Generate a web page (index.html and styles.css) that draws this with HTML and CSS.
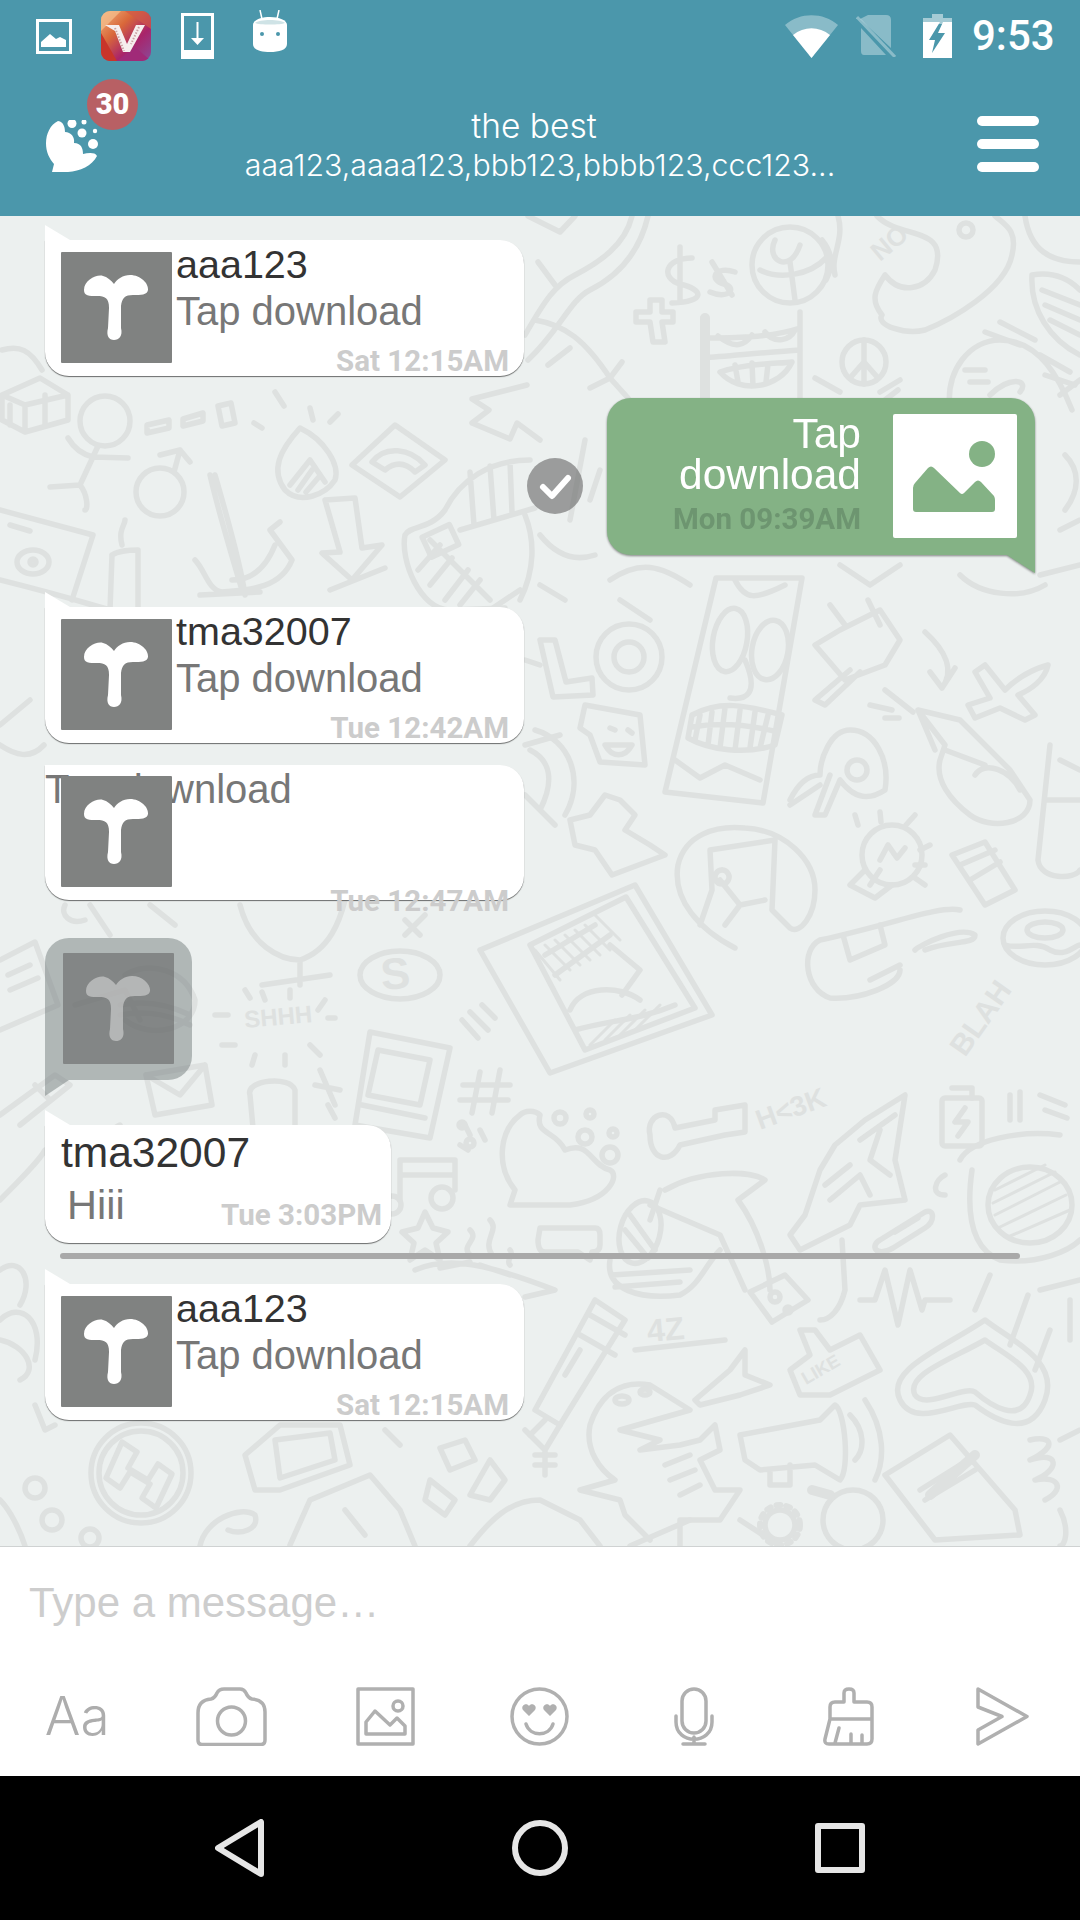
FILE: index.html
```html
<!DOCTYPE html>
<html lang="en">
<head>
<meta charset="utf-8">
<title>the best</title>
<link rel="stylesheet" href="styles.css">
</head>
<body>
<div class="phone">
  <svg width="0" height="0" class="defs">
    <defs>
      <symbol id="seed" viewBox="0 0 111 111"><path d="M23 38C23 28 36 22 42 24C46 25 50 28 53 32C56 27 62 23 69 23C80 23 88 32 87 38C86 43 80 43 72 43C64 43 61 46 60 54L60 76C62 84 58 88 53 88C48 88 45 84 47 76L48 56C48 46 44 44 36 44C28 44 23 44 23 38Z"/></symbol>
    </defs>
  </svg>
  <header class="top">
    <div class="status">
      <div class="status-left">
        <svg class="s-img" viewBox="0 0 36 35"><rect x="1.5" y="1.5" width="33" height="32" fill="none" stroke="#fff" stroke-width="3"/><path d="M5 28V23L14 15L20 20L24 18L30 21V28Z" fill="#fff"/></svg>
        <svg class="s-v" viewBox="0 0 50 50">
          <defs>
            <linearGradient id="vg" x1="0" y1="0" x2="1" y2="1"><stop offset="0" stop-color="#f0b27c"/><stop offset=".35" stop-color="#d9683a"/><stop offset=".65" stop-color="#a9246a"/><stop offset="1" stop-color="#8a4a98"/></linearGradient>
            <clipPath id="vc"><rect width="50" height="50" rx="9"/></clipPath>
          </defs>
          <g clip-path="url(#vc)">
            <rect width="50" height="50" fill="url(#vg)"/>
            <path d="M0 50V22L16 50Z" fill="#c8352a"/>
            <path d="M16 50L34 36L50 50Z" fill="#a02a78"/>
            <path d="M24 0H50V18Z" fill="#d05a48" opacity=".7"/>
            <path d="M0 0H20L0 20Z" fill="#f5c08f" opacity=".7"/>
          </g>
          <path d="M4 14H18L26 33L35 14H44L29 41H22L14 20Z" fill="#f6eeee"/>
          <path d="M14 17L23 40M38 16L30 33" stroke="#c9a3a3" stroke-width="2" stroke-dasharray="1.5 1.5" fill="none"/>
        </svg>
        <svg class="s-dl" viewBox="0 0 33 46"><path d="M0 0H33V46H0ZM3 3V37H30V3Z" fill="#fff" fill-rule="evenodd"/><path d="M15.500 9H17.500V25L23 25L16.500 32L10 25L15.500 25Z" fill="#fff"/></svg>
        <svg class="s-and" viewBox="0 0 34 46"><path d="M7 0L9 9M26 0L24 9" stroke="#fff" stroke-width="1.500" fill="none"/><path d="M0 15C0 10 8 7 17 7S34 10 34 15V34C34 40 26 42 17 42S0 40 0 34Z" fill="#fff"/><path d="M2 13C6 9 28 9 32 13C28 15 6 15 2 13Z" fill="#cfe3e6"/><circle cx="9" cy="24" r="2" fill="#4b97ab"/><circle cx="25" cy="24" r="2" fill="#4b97ab"/></svg>
      </div>
      <div class="status-right">
        <svg class="s-wifi" viewBox="0 0 53 43"><path d="M0 10C15 -3 38 -3 53 10L26.500 43Z" fill="#fff" opacity=".35"/><path d="M8 20C19 11 34 11 45 20L26.500 43Z" fill="#fff"/></svg>
        <svg class="s-sim" viewBox="0 0 40 42"><path d="M12 0H30Q35 0 35 5V33L4 4ZM5 13L30 40H8Q5 40 5 36Z" fill="#fff" opacity=".35"/><path d="M1 2L39 42" stroke="#fff" stroke-width="3" opacity=".35"/></svg>
        <svg class="s-bat" viewBox="0 0 29 44"><path d="M9 0H20V4H29V10H0V4H9Z" fill="#fff" opacity=".5"/><path d="M0 8H29V44H0ZM17 8L6 26H12L9 39L22 19H15L20 8Z" fill="#fff" fill-rule="evenodd"/></svg>
        <span class="clock">9:53</span>
      </div>
    </div>
    <div class="appbar">
      <div class="logo">
        <svg class="logo-mark" viewBox="0 0 56 56"><path d="M12 1C4 5 0 14 0 23C0 32 3 38 8 44L6 52H22C34 51 46 46 51 36C49 32 42 33 37 34C37 28 35 23 28 23C29 17 25 12 19 12C19 8 18 2 12 1Z" fill="#fff"/><circle cx="26" cy="3.500" r="4.500" fill="#fff"/><circle cx="38" cy="2" r="2.500" fill="#fff"/><circle cx="36" cy="13" r="4.500" fill="#fff"/><circle cx="49" cy="11" r="2.200" fill="#fff"/><circle cx="47" cy="24" r="5" fill="#fff"/></svg>
        <span class="badge">30</span>
      </div>
      <div class="title">
        <div class="title-main">the best</div>
        <div class="title-sub">aaa123,aaaa123,bbb123,bbbb123,ccc123...</div>
      </div>
      <div class="burger"><i></i><i></i><i></i></div>
    </div>
  </header>

  <main class="chat">
    <svg class="doodles" viewBox="0 216 1080 1330" width="1080" height="1330">
      <g class="dd">
        <!-- top right -->
        <path d="M528 360C560 330 570 300 590 290C620 275 640 250 648 216M525 335C545 300 555 285 575 275C600 262 625 245 632 216M535 320C565 325 585 340 610 378M528 216L560 232L575 216M610 378L590 388M610 378L622 362M610 378L628 398M570 348L548 365M538 262L555 285"/>
        <path d="M680 247V300M692 258C665 258 660 278 680 284C705 290 705 302 672 303M712 262L732 295M735 272C715 265 708 280 724 284C738 288 728 300 710 292"/>
        <circle cx="790" cy="265" r="38"/><path d="M775 240C765 260 790 275 800 245M790 262L795 300M760 270C780 280 810 275 826 258M822 240C830 250 835 262 826 280M838 216C845 240 830 255 835 275"/>
        <path d="M877 216C900 240 950 225 935 270C925 290 900 295 885 275C875 290 870 300 882 315C875 325 905 335 925 330C950 320 1005 290 1012 255C1018 230 1005 225 995 216"/>
        <circle cx="966" cy="230" r="7"/>
        <path d="M1025 216C1030 250 1050 262 1080 262"/>
        <path d="M650 300H662V312H673V322H662L665 342H653L650 322H636V312H650Z"/>
        <path d="M703 318V398M800 312V398M703 338C730 338 770 338 800 328M703 358C730 356 770 352 800 350M718 336C735 350 745 345 752 335M765 332C775 345 790 340 795 330M720 372C750 362 780 364 792 362C780 388 740 395 720 372ZM735 365L738 382M752 363L753 386M768 364L766 382"/>
        <path class="thick" d="M705 318V398"/>
        <circle cx="864" cy="362" r="22"/><path d="M864 340V384M864 362L850 378M864 362L878 378M815 378L840 392M880 392L900 380M885 400L898 390"/>
        <path d="M950 410C945 370 970 340 1000 340C1040 340 1060 380 1072 410M985 332L1020 345M1000 322L1035 340M1040 355L1070 372M1045 375L1075 385M965 370H985M970 382H988M990 395C1010 375 1030 380 1020 392"/>
        <path d="M1032 275C1060 270 1075 285 1080 290M1032 275C1030 310 1050 340 1080 355M1042 290L1080 305M1045 305L1080 320M1050 320L1080 335"/>
        <path d="M1060 395L1080 380M1065 455C1080 470 1080 490 1065 510M1060 530L1080 520M1040 575L1080 565"/>
        <path d="M527 385L472 399L489 410L472 423L510 439L517 423L540 440"/>
        <!-- under the sent row -->
        <path d="M610 580C640 560 660 565 690 585M840 565L870 585L900 565M960 575C980 595 1020 600 1045 585M620 600L650 620M540 585L565 600"/>
        <path d="M600 470L590 500M585 440L570 520M540 535C560 560 580 560 595 555"/>
        <!-- left mid -->
        <path d="M2 395L40 378L68 395V420L25 432L2 420ZM25 405V432M2 395L25 405L68 395M10 405V425M45 395V425M2 350C20 345 30 350 42 370"/>
        <circle cx="105" cy="421" r="25"/>
        <path d="M98 446L80 485M68 438C75 450 85 455 93 457L128 458M80 485L50 487M80 485C88 495 88 510 85 510"/>
        <path d="M147 425L169 420V428L147 433ZM183 419L203 413V421L183 426ZM218 406L231 403L235 423L222 426Z"/>
        <circle cx="160" cy="492" r="24"/><path d="M174 472L180 450M160 455L180 450L190 462"/>
        <path d="M300 428C280 450 270 470 285 490C300 505 325 495 335 480C340 465 325 440 300 428ZM290 485L310 460L325 482M298 490L312 470M306 492L318 478"/>
        <path d="M395 425L445 460L400 497L352 465ZM372 462C385 445 410 448 425 465L415 472C405 462 395 462 385 470Z"/>
        <path d="M275 392L284 406M310 408L313 420M330 422L338 414M262 428L254 423"/>
        <path d="M210 475C218 510 230 550 242 590M215 475C225 510 240 560 245 595"/>
        <path d="M195 560C205 570 208 590 222 592C245 590 280 590 292 560L270 530L280 522M275 545C265 570 250 580 232 580M200 595L260 592"/>
        <path d="M112 555L110 610M138 550V612M112 555C120 550 130 550 138 550M122 545C118 530 125 525 125 520M110 610C75 600 60 595 0 580"/>
        <path d="M325 500L355 498L362 548L382 545L352 580L322 553L340 552ZM330 590L385 568"/>
        <path d="M0 510L93 535L72 600M10 525L30 531"/><ellipse cx="33" cy="562" rx="16" ry="12"/><circle cx="33" cy="562" r="3"/>
        <path d="M530 460C490 460 460 480 445 510C430 530 410 525 405 535C400 560 420 610 450 610L505 608M460 530L535 508M430 540L490 600M470 472L474 525M490 466L494 520M510 462L512 512M440 545L418 570M452 558L430 585M468 570L445 600M480 580L460 605"/>
        <rect x="425" y="530" width="30" height="22" transform="rotate(-25 440 540)"/>
        <path d="M525 515C535 540 535 570 520 600M490 610L520 590"/>
        <!-- bottom of bubble 3 -->
        <path d="M0 745C15 755 30 760 44 745M0 725L30 700M525 660L540 665M525 745L560 735"/>
        <!-- tiki -->
        <path d="M716 578L802 578L763 803L665 792Z"/>
        <ellipse cx="730" cy="640" rx="17" ry="32" transform="rotate(10 730 640)"/><ellipse cx="770" cy="650" rx="18" ry="30" transform="rotate(10 770 650)"/>
        <path d="M735 580C745 600 755 600 785 585M692 715C720 700 745 705 782 715L775 745C745 755 710 750 688 738ZM692 727C720 722 750 725 778 732M700 715L695 740M712 712L708 745M725 708L720 748M740 710L735 750M755 712L750 748M768 715L760 748M675 760L700 778L725 765L760 780M745 660C760 695 745 700 730 698"/>
        <!-- LO and friends -->
        <path d="M540 640L555 640L566 682L592 678L593 695L553 697Z"/><circle cx="629" cy="657" r="33"/><circle cx="629" cy="657" r="15"/>
        <path d="M840 630L880 610L900 640L885 665L845 680L815 645ZM860 672L825 705L815 700L850 670M868 600L880 625M830 605L845 625"/>
        <path d="M925 632C945 650 955 670 942 688M930 672L942 688L955 668"/>
        <path d="M1048 665C1030 670 1015 680 1005 690L985 665L975 672L990 698L968 705L975 718L1000 708L1025 720L1035 715L1018 695C1030 690 1045 680 1048 665Z"/>
        <path d="M885 690L913 712M870 705L892 710M885 718L899 718"/>
        <path d="M918 710L960 720L1010 770L1030 800C1030 825 990 830 970 815C950 800 935 780 940 760L945 745ZM918 710L935 750M945 750L985 765M975 775C985 760 1010 770 1020 790"/>
        <path d="M585 705L640 715L645 765L600 762L590 735L580 728ZM605 745C612 758 625 758 632 745ZM610 728L615 730M628 730L632 733"/>
        <path d="M535 730C570 740 585 780 565 815M530 750C550 760 555 780 540 810M525 795L555 825"/>
        <path d="M605 795L620 800L635 815L625 830L650 845L665 855L612 875L595 850L575 845L570 820L590 815Z"/>
        <path d="M790 800C800 780 810 775 820 775C820 760 830 730 850 730C875 730 890 760 885 790C870 800 855 800 840 780L825 815L815 815L830 775M790 805L820 785"/>
        <circle cx="857" cy="770" r="10"/>
        <path d="M735 948C700 930 672 900 678 865C685 835 715 825 745 828C785 830 815 860 815 890C815 915 800 935 790 928L772 910L775 840L710 850L712 890L700 925M722 870a7 7 0 1 0 .1 0M720 880L740 905L725 925M740 905L765 900"/>
        <circle cx="892" cy="855" r="30"/>
        <path d="M865 870L850 885L875 898L892 885M870 885L880 870M880 860L888 845L897 858L905 848M855 815L858 825M880 812L881 822M915 815L906 825M930 845L920 850M925 865L915 865M925 885L915 878"/>
        <path d="M952 855L985 842L1015 890L985 905ZM960 865L995 850M970 880L1000 862"/>
        <ellipse cx="1045" cy="938" rx="42" ry="27"/><ellipse cx="1045" cy="930" rx="18" ry="8"/>
        <path d="M1005 945C1020 950 1035 940 1050 950C1065 958 1075 945 1080 945"/>
        <path d="M960 910C940 905 890 925 820 940C800 950 805 990 830 998C860 1000 900 985 900 970M843 935L850 960L885 945L880 925M870 980L900 965M925 950C950 940 975 945 975 935C960 925 920 945 915 950"/>
        <path d="M1050 745L1038 860C1040 880 1075 880 1080 870M1045 800H1080M1060 760L1080 770"/>
        <!-- frame -->
        <path d="M635 885L712 1015L550 1073L480 950Z"/>
        <path d="M626 897L695 1008L585 1050L530 945ZM545 955L595 925M555 975L610 935M570 1010C580 985 620 985 640 1000M575 1030C610 1020 640 1020 675 1005M610 945L640 970L622 995"/>
        <path class="thin" d="M535 950L560 980M545 945L570 970M555 940L580 965M565 935L590 960M575 930L600 955M585 925L610 950M595 915L620 940M590 1045L615 1020M605 1040L630 1015M620 1035L645 1010M635 1030L660 1005"/>
        <!-- goblet zone -->
        <path d="M240 905C250 945 280 960 300 960C330 950 340 920 345 900M300 960V985M262 985L330 975M90 905L110 935M150 905L175 925M65 905C60 915 70 925 85 920M405 920L420 935M425 915L405 935"/>
        <ellipse cx="400" cy="975" rx="40" ry="24"/>
        <path d="M0 960L35 942L58 1005L0 1030M8 975L30 965M10 990L38 978"/>
        <path d="M125 975C150 960 185 970 195 1000C195 1030 150 1040 125 1020M75 1005L125 990L140 1020M120 1005C145 1000 170 1005 190 1015M120 1015C145 1010 170 1015 190 1025"/>
        <path d="M215 1015H228M222 1045H235M245 990L250 998M262 992L265 1000M290 990V998M325 1000L318 1010M335 1018H328M310 1045L320 1055M255 1055L252 1065M285 1055V1065"/>
        <path d="M370 1032L450 1048L430 1138L355 1125ZM378 1050L430 1060L420 1105L368 1095ZM362 1105L425 1118"/>
        <path d="M462 1020L478 1038M470 1012L488 1030M482 1005L495 1018"/>
        <path d="M480 1072L472 1113M500 1070L492 1113M463 1085H510M460 1100H508"/>
        <path d="M320 1070L335 1105M315 1085L340 1090M328 1105L335 1118"/>
        <path d="M250 1095C245 1080 290 1075 295 1090V1150M250 1095L255 1150"/>
        <path d="M146 1075L205 1065L212 1105L155 1115ZM146 1075L180 1095L205 1065"/>
        <path d="M0 1115L55 1075L70 1085L20 1125M35 1085L50 1100M60 1140C80 1150 110 1130 120 1125"/>
        <path d="M0 1200C20 1180 40 1160 45 1150M0 1270C20 1255 35 1280 20 1305M0 1340C25 1345 40 1370 20 1380M0 1320C20 1300 45 1320 35 1360"/>
        <path d="M465 1125L470 1135M480 1130L485 1140M460 1145L468 1150"/>
        <path d="M400 1160H455V1190M400 1160V1200M402 1175H455"/><circle cx="442" cy="1198" r="11"/><circle cx="392" cy="1205" r="9"/>
        <!-- bomb -->
        <path d="M520 1115C500 1130 495 1165 515 1190L510 1205L570 1205C610 1200 620 1175 610 1170C590 1165 590 1140 565 1150C555 1130 535 1135 540 1115C535 1110 525 1110 520 1115Z"/>
        <circle cx="560" cy="1118" r="6"/><circle cx="585" cy="1137" r="7"/><circle cx="610" cy="1155" r="8"/><circle cx="590" cy="1114" r="4"/><circle cx="613" cy="1133" r="4"/>
        <circle cx="462" cy="1125" r="3"/><circle cx="470" cy="1143" r="4"/>
        <!-- key -->
        <path d="M650 1135C645 1115 670 1105 675 1128L715 1120V1110L745 1105V1132L725 1135L680 1145C670 1165 650 1160 650 1135Z"/>
        <path d="M820 1170L835 1145L865 1120L905 1095L895 1160L905 1200L860 1205L850 1225L800 1250L790 1235L805 1215Z"/>
        <path d="M825 1185L850 1165M830 1200L860 1175L870 1195M860 1140L895 1115M880 1130L870 1160L890 1175"/>
        <path d="M842 1240L845 1290C840 1310 830 1320 820 1320"/>
        <rect x="942" y="1098" width="40" height="48" rx="3"/><path d="M952 1088H972V1098M965 1108L955 1122H968L958 1136"/>
        <path d="M1010 1095V1120M1020 1092V1120M1040 1095L1065 1105M1045 1110L1067 1118"/>
        <path d="M960 1160C970 1140 1020 1130 1060 1135M945 1175C935 1180 930 1195 945 1195M972 1170C965 1220 975 1250 1000 1260C1040 1265 1070 1250 1080 1240"/>
        <ellipse cx="1030" cy="1205" rx="42" ry="38"/>
        <path class="thin" d="M995 1190L1045 1165M993 1203L1055 1172M995 1215L1060 1182M1000 1227L1066 1195M1008 1237L1070 1210"/>
        <!-- hat -->
        <path d="M665 1190C700 1170 750 1170 765 1180L738 1200C760 1230 770 1270 770 1290M660 1190L650 1220M650 1205L720 1235L745 1290M610 1260C605 1290 640 1300 680 1295C700 1285 705 1265 720 1250M612 1275L690 1270M615 1287L680 1282"/>
        <ellipse cx="640" cy="1232" rx="20" ry="32" transform="rotate(15 640 1232)"/>
        <path d="M630 1215L655 1250M625 1230L648 1258"/>
        <path d="M880 1240L925 1212C935 1208 935 1222 925 1228L893 1248C875 1258 870 1245 880 1240ZM895 1232L918 1218"/>
        <path d="M425 1212L433 1228L448 1232L436 1243L440 1260L425 1250L410 1260L414 1243L402 1232L418 1228Z"/>
        <path d="M470 1230C480 1240 460 1245 470 1255M490 1220C500 1230 482 1240 492 1255M510 1250C515 1255 505 1260 510 1265"/>
        <path d="M540 1228H595Q600 1228 600 1235V1245Q600 1252 592 1252L590 1260L578 1252H545Q538 1252 538 1240Z"/>
        <path d="M415 1270C450 1255 490 1265 555 1290L525 1297M440 1268L470 1262M480 1265L510 1275"/>
        <path d="M750 1292L785 1275L808 1300L772 1322ZM750 1292L772 1322"/><circle cx="775" cy="1297" r="5"/><circle cx="788" cy="1310" r="3"/>
        <path d="M860 1300H875L885 1270L898 1325L910 1270L922 1310L925 1300H950"/>
        <path d="M985 1320C940 1350 885 1370 900 1400C915 1430 960 1400 975 1405C995 1420 1030 1440 1045 1400C1060 1360 1010 1340 985 1320Z"/>
        <path d="M985 1340C950 1360 905 1375 915 1395C925 1410 965 1385 975 1392C990 1405 1020 1425 1030 1395C1040 1370 1005 1355 985 1340Z"/>
        <path d="M975 1310L990 1275M1010 1345L1028 1295M1035 1370L1050 1330"/>
        <path d="M535 1410L595 1300L625 1320L560 1425ZM590 1315L625 1335M580 1335L615 1355M565 1375L580 1350M545 1420L530 1435"/>
        <path d="M635 1350L725 1340"/>
        <path d="M790 1370L810 1355L800 1330L815 1330L830 1350L860 1335L880 1370L830 1395L800 1395Z"/>
        <path d="M695 1400L730 1370L745 1350L745 1375L770 1385L740 1395L700 1405Z"/>
        <path d="M590 1425C600 1395 620 1380 650 1385L690 1410L620 1430L660 1440L640 1450L680 1445L700 1440L715 1425L720 1450L700 1460L715 1490L740 1490L720 1520L680 1520L680 1546M590 1425C585 1450 600 1470 615 1480L580 1490L620 1500L625 1515L650 1540M665 1465L690 1455M670 1480L695 1470M680 1495L700 1485"/>
        <ellipse cx="622" cy="1400" rx="7" ry="4"/><ellipse cx="645" cy="1392" rx="5" ry="3"/>
        <path d="M740 1435L820 1420L835 1405C845 1410 850 1470 840 1480L815 1465L760 1470L745 1460ZM770 1470V1485H790V1465M850 1415C865 1430 865 1450 855 1460M865 1400C885 1430 885 1460 875 1480"/>
        <path d="M885 1475L950 1435L1015 1510L1020 1535L935 1540ZM920 1490L960 1465M925 1500L975 1470"/>
        <path class="thick" d="M930 1495L975 1455"/>
        <path d="M1030 1440C1050 1435 1060 1445 1030 1460C1060 1450 1060 1470 1035 1480C1060 1475 1065 1490 1045 1500"/>
        <circle cx="853" cy="1520" r="30"/><path class="thick" d="M830 1495L812 1490"/>
        <circle cx="780" cy="1525" r="15"/><circle cx="780" cy="1525" r="20" class="dash"/>
        <path d="M525 1430L545 1450L560 1425M545 1450V1475M535 1455H555M535 1465H555"/>
        <path d="M440 1448L465 1440L475 1460L450 1470ZM490 1460L505 1480L490 1500L470 1495ZM430 1480L455 1500L445 1515L425 1500Z"/>
        <path d="M255 1490L245 1455L280 1425L340 1425L350 1465L280 1490ZM275 1440L330 1433L335 1460L280 1478Z"/>
        <circle cx="141" cy="1473" r="50"/><circle cx="141" cy="1473" r="42"/>
        <path d="M122 1442L137 1452L128 1468L148 1480L158 1464L172 1474L156 1508L142 1498L150 1484L130 1472L120 1488L106 1478Z"/>
        <circle cx="35" cy="1488" r="10"/><circle cx="52" cy="1520" r="10"/><circle cx="90" cy="1538" r="9"/>
        <path d="M35 1405L45 1430L55 1425M200 1546C205 1520 240 1505 255 1515C260 1530 240 1535 228 1530M0 1500C10 1510 20 1530 25 1546"/>
        <path d="M290 1545L310 1500L370 1475L400 1510L415 1546M345 1510L365 1535M385 1430L400 1445"/>
        <path d="M470 1546C490 1520 510 1500 540 1500L580 1520L600 1546M630 1546L690 1520M740 1520L780 1546"/>
        <path d="M1060 1510C1070 1530 1065 1546 1060 1546M1040 1290L1080 1280M1070 1300V1340M1060 1440L1080 1430"/>
      </g>
      <g class="dt">
        <text x="0" y="0" transform="translate(880 262) rotate(-40)" font-size="26">NO</text>
        <text x="0" y="0" transform="translate(245 1028) rotate(-5)" font-size="24">SHHH</text>
        <text x="0" y="0" transform="translate(382 990) rotate(-5)" font-size="44">S</text>
        <text x="0" y="0" transform="translate(965 1058) rotate(-55)" font-size="30">BLAH</text>
        <text x="0" y="0" transform="translate(760 1130) rotate(-20)" font-size="28">H&lt;3K</text>
        <text x="0" y="0" transform="translate(648 1342) rotate(-5)" font-size="32">4Z</text>
        <text x="0" y="0" transform="translate(806 1385) rotate(-30)" font-size="18">LIKE</text>
      </g>
    </svg>

    <div class="msg-row first">
      <article class="bubble in tailed">
        <svg class="avatar" viewBox="0 0 111 111"><use href="#seed"/></svg>
        <div class="body">
          <div class="name">aaa123</div>
          <div class="text">Tap download</div>
          <time class="stamp">Sat 12:15AM</time>
        </div>
      </article>
    </div>

    <div class="msg-row out">
      <span class="check"><svg viewBox="0 0 56 56"><path d="M16 29L25 38L41 20" fill="none" stroke="#fff" stroke-width="6" stroke-linecap="round" stroke-linejoin="round"/></svg></span>
      <article class="bubble sent">
        <div class="sent-body">
          <div class="sent-text">Tap download</div>
          <time class="stamp sent-stamp">Mon 09:39AM</time>
        </div>
        <svg class="sent-thumb" viewBox="0 0 124 124"><rect width="124" height="124" fill="#fff" rx="2"/><circle cx="89" cy="40" r="13" fill="#84b285"/><path d="M20 74Q20 71 22 69L35 54Q38 51 41 54L67 79Q69 81 71 79L82 68Q85 65 88 68L101 82Q102 84 102 86V95Q102 98 99 98H23Q20 98 20 95Z" fill="#84b285"/></svg>
      </article>
    </div>

    <div class="msg-row gap-l">
      <article class="bubble in tailed">
        <svg class="avatar" viewBox="0 0 111 111"><use href="#seed"/></svg>
        <div class="body">
          <div class="name">tma32007</div>
          <div class="text">Tap download</div>
          <time class="stamp">Tue 12:42AM</time>
        </div>
      </article>
    </div>

    <div class="msg-row gap-s">
      <article class="bubble in broken">
        <div class="text broken-text">Tap download</div>
        <svg class="avatar" viewBox="0 0 111 111"><use href="#seed"/></svg>
        <time class="stamp broken-stamp">Tue 12:47AM</time>
      </article>
    </div>

    <div class="msg-row gap-m">
      <article class="ghost">
        <svg class="avatar ghost-avatar" viewBox="0 0 111 111"><use href="#seed"/></svg>
      </article>
    </div>

    <div class="msg-row gap-xl">
      <article class="bubble in tailed short">
        <div class="name short-name">tma32007</div>
        <div class="short-row">
          <div class="text hi">Hiii</div>
          <time class="stamp">Tue 3:03PM</time>
        </div>
      </article>
    </div>

    <hr class="rule">

    <div class="msg-row gap-r">
      <article class="bubble in tailed">
        <svg class="avatar" viewBox="0 0 111 111"><use href="#seed"/></svg>
        <div class="body">
          <div class="name">aaa123</div>
          <div class="text">Tap download</div>
          <time class="stamp">Sat 12:15AM</time>
        </div>
      </article>
    </div>
  </main>

  <footer class="composer">
    <div class="input">Type a message…</div>
    <div class="tools">
      <span class="aa">Aa</span>
      <svg class="t-cam" viewBox="0 0 71 59"><path d="M6 57.500H65Q69 57.500 69 53V25Q69 13 56 12Q52 11 50 6Q48 2 44 2H28Q23 2 21 6Q19 11 15 12Q2 13 2 26V53Q2 57.500 6 57.500Z"/><circle cx="35.500" cy="34" r="14"/></svg>
      <svg class="t-pic" viewBox="0 0 59 59"><rect x="2" y="2" width="55" height="55"/><path d="M10 35V47H49V39L41 31L34 38L19 24Z"/><circle cx="42" cy="19" r="5"/></svg>
      <svg class="t-smile" viewBox="0 0 59 59"><circle cx="29.500" cy="29.500" r="27.500"/><path d="M16 37C20 50 39 50 43 37"/><path class="fill" d="M19 29L13 23C10 18 17 15 19 19C21 15 28 18 25 23ZM40 29L34 23C31 18 38 15 40 19C42 15 49 18 46 23Z"/></svg>
      <svg class="t-mic" viewBox="0 0 40 59"><rect x="8" y="2" width="24" height="44" rx="12"/><path d="M2 29V35C2 58 38 58 38 35V29M20 50V57M9 57H31"/></svg>
      <svg class="t-broom" viewBox="0 0 52 59"><path d="M21 15V6Q21 2 26 2Q31 2 31 6V15H44Q49 15 49 20V52Q49 57 44 57H6Q1 57 2 52L7 32V20Q7 15 12 15ZM7 32H49M16 41L12 56M28 47V56M39 48V56"/></svg>
      <svg class="t-send" viewBox="0 0 53 59"><path d="M2 2L51 29.500L2 57V43L26 29.500L2 20Z"/></svg>
    </div>
  </footer>

  <nav class="nav">
    <svg class="n-back" viewBox="0 0 50 58"><path d="M3 29L46 3V55Z"/></svg>
    <svg class="n-home" viewBox="0 0 56 56"><circle cx="28" cy="28" r="25"/></svg>
    <span class="n-recent"></span>
  </nav>
</div>
</body>
</html>
```

FILE: styles.css
```css
* { box-sizing: border-box; }
html, body { margin: 0; padding: 0; }
body { font-family: "Liberation Sans", Arial, sans-serif; background: #000; }

.phone { width: 1080px; height: 1920px; display: flex; flex-direction: column; overflow: hidden; }
.defs { position: absolute; }

/* header */
.top { height: 216px; flex: none; background: #4b97ab; color: #fff; }
.status { height: 72px; display: flex; align-items: center; justify-content: space-between; padding: 0 26px 0 36px; }
.status-left, .status-right { display: flex; align-items: center; }
.s-img { width: 36px; height: 35px; }
.s-v { width: 50px; height: 50px; margin-left: 29px; }
.s-dl { width: 33px; height: 46px; margin-left: 30px; }
.s-and { width: 34px; height: 46px; margin-left: 39px; margin-top: -6px; }
.s-wifi { width: 53px; height: 43px; }
.s-sim { width: 40px; height: 42px; margin-left: 18px; }
.s-bat { width: 29px; height: 44px; margin-left: 27px; }
.clock { margin-left: 20px; width: 82px; font: 500 42px/48px Roboto, sans-serif; }

.appbar { height: 144px; display: flex; padding: 0 41px 0 46px; position: relative; }
.logo { width: 56px; height: 56px; margin-top: 48px; position: relative; flex: none; }
.logo-mark { width: 56px; height: 56px; display: block; }
.badge { position: absolute; left: 41px; top: -41px; width: 51px; height: 51px; border-radius: 50%; background: #b86064; color: #fff; font: 900 29px/51px Roboto, sans-serif; text-align: center; }
.title { flex: 1; text-align: center; font-family: Inter, "Liberation Sans", sans-serif; font-weight: 300; padding-top: 32px; margin-right: -1px; }
.title-main { font-size: 33.500px; line-height: 44px; margin-right: 12px; }
.title-sub { font-size: 30.300px; line-height: 36px; margin-top: -1px; white-space: nowrap; }
.burger { width: 62px; flex: none; display: flex; flex-direction: column; gap: 13px; padding-top: 44px; }
.burger i { display: block; height: 10px; border-radius: 5px; background: #fff; }

/* chat */
.chat { height: 1330px; flex: none; background: #ecf0ef; position: relative; overflow: hidden; }
.doodles { position: absolute; left: 0; top: 0; }
.dd { fill: none; stroke: #dee1e0; stroke-width: 5.500; stroke-linecap: round; stroke-linejoin: round; }
.dd .thin { stroke-width: 3; }
.dd .thick { stroke-width: 10; }
.dd .dash { stroke-width: 6; stroke-dasharray: 4 6; }
.dt text { fill: #dee1e0; font-family: "Liberation Sans", sans-serif; font-weight: 700; }

.msg-row { position: relative; display: flex; padding-left: 45px; }
.first { margin-top: 24px; }
.out { margin-top: 22px; padding: 0 45px 0 0; justify-content: flex-end; align-items: center; }
.gap-l { margin-top: 52px; }
.gap-s { margin-top: 22px; }
.gap-m { margin-top: 38px; }
.gap-xl { margin-top: 45px; }
.gap-r { margin-top: 25px; }

.bubble { position: relative; display: flex; }
.in { width: 479px; background: #fff; border-radius: 0 24px 24px 24px; padding: 0 0 2px 16px; box-shadow: 0 1px 1px rgba(0,0,0,.55); }
.tailed::before { content: ""; position: absolute; left: 0; top: -15px; width: 25px; height: 15px; background: #fff; clip-path: polygon(0 0, 100% 100%, 0 100%); }

.avatar { width: 111px; height: 111px; margin-top: 12px; flex: none; background: #808281; fill: #fff; border-radius: 1px; position: relative; }
.body { flex: 1; margin-left: 4px; padding-top: 1px; min-width: 0; }
.name { font-size: 39.500px; line-height: 47px; color: #333; white-space: nowrap; }
.text { font-size: 40px; line-height: 47px; color: #777; white-space: nowrap; }
.stamp { display: block; font: 700 29.500px/26px Roboto, sans-serif; color: #ccc; white-space: nowrap; }
.body .stamp { margin-top: 13px; padding-right: 15px; text-align: right; }

/* outgoing */
.sent { width: 428px; height: 157px; background: #84b285; border-radius: 24px 24px 0 24px; filter: drop-shadow(0 1px 1px rgba(0,0,0,.45)); justify-content: flex-end; padding-right: 18px; }
.sent::after { content: ""; position: absolute; right: 0; top: 100%; width: 28px; height: 18px; background: #84b285; clip-path: polygon(0 0, 100% 0, 100% 100%); }
.sent-body { width: 220px; margin-right: 32px; padding-top: 15px; text-align: right; }
.sent-text { font-size: 42.500px; line-height: 41px; color: #fff; padding-left: 30px; }
.sent-stamp { margin-top: 11px; color: #6d9570; }
.sent-thumb { width: 124px; height: 124px; margin-top: 16px; flex: none; }
.check { width: 56px; height: 56px; margin: 19px 24px 0 0; border-radius: 50%; background: rgba(105,105,105,.62); }
.check svg { display: block; }

/* message rendered out of place */
.broken { height: 135px; }
.broken-text { position: absolute; left: 0; top: 1px; }
.broken .avatar { margin-top: 11px; }
.broken-stamp { position: absolute; right: 15px; top: 123px; }

/* pending picture */
.ghost { position: relative; width: 147px; height: 142px; padding: 15px 18px; background: rgba(115,125,125,.5); border-radius: 24px 24px 24px 0; }
.ghost::after { content: ""; position: absolute; left: 0; top: 100%; width: 24px; height: 16px; background: rgba(115,125,125,.5); clip-path: polygon(0 0, 100% 0, 0 100%); }
.ghost-avatar { display: block; margin: 0; background: rgba(95,95,95,.55); fill: rgba(255,255,255,.4); }

/* short text */
.short { width: 346px; height: 118px; flex-direction: column; padding: 4px 9px 0 16px; }
.short-name { font-size: 42.500px; }
.short-row { display: flex; justify-content: space-between; align-items: flex-end; margin-top: 5px; }
.hi { margin-left: 6px; font-size: 41.500px; }

.rule { margin: 10px 60px 0; height: 6px; border: 0; border-radius: 3px; background: #a9a9a9; position: relative; }

/* composer */
.composer { height: 230px; flex: none; background: #fff; border-top: 1px solid #cfd2d2; display: flex; flex-direction: column; }
.input { height: 140px; padding: 26px 0 0 29px; font-size: 42px; line-height: 60px; color: #cdcdcd; }
.tools { display: grid; grid-template-columns: repeat(7, 1fr); height: 59px; align-items: center; justify-items: center; }
.tools svg { height: 59px; fill: none; stroke: #b0b0b0; stroke-width: 3.500; stroke-linejoin: round; stroke-linecap: round; }
.tools .fill { fill: #b0b0b0; stroke: none; }
.aa { font: 300 53px/59px Inter, sans-serif; color: #adadad; }
.t-cam { width: 71px; }
.t-pic { width: 59px; }
.t-smile { width: 59px; }
.t-mic { width: 40px; }
.t-broom { width: 52px; }
.t-send { width: 53px; }

/* nav */
.nav { flex: 1; background: #000; position: relative; display: grid; grid-template-columns: repeat(3, 1fr); align-items: center; }
.n-back { width: 50px; height: 58px; justify-self: center; margin-left: 120px; fill: none; stroke: #e6e6e6; stroke-width: 6; stroke-linejoin: round; }
.n-home { width: 56px; height: 56px; justify-self: center; fill: none; stroke: #e6e6e6; stroke-width: 6; }
.n-recent { width: 50px; height: 50px; justify-self: center; margin-right: 120px; border: 6px solid #e6e6e6; border-radius: 3px; }
```
